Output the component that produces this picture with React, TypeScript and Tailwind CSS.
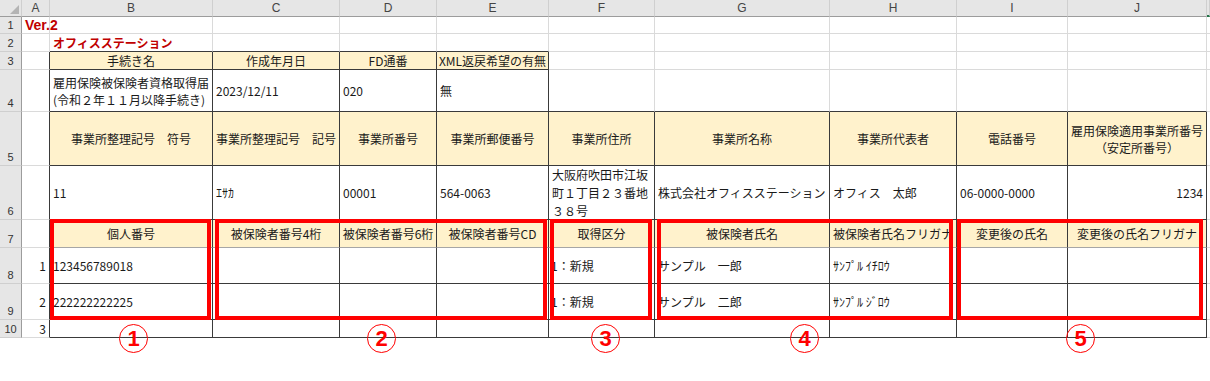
import type { ReactNode } from 'react'

type Cell = { t?: ReactNode; fill?: boolean; align?: 'l' | 'c' | 'r'; cls?: string }

const colLabels = ['A', 'B', 'C', 'D', 'E', 'F', 'G', 'H', 'I', 'J', '']

// rows 1..10, columns A..K (index 0..10)
const rows: Record<number, Cell>[] = [
  { 0: { t: 'Ver.2', cls: 'overflow-visible font-bold text-[14px] text-[#c00000] font-["Liberation_Sans"]' } },
  { 1: { t: 'オフィスステーション', cls: 'font-bold text-[11.5px] text-[#c00000]' } },
  {
    1: { t: '手続き名', fill: true, align: 'c' },
    2: { t: '作成年月日', fill: true, align: 'c' },
    3: { t: 'FD通番', fill: true, align: 'c' },
    4: { t: 'XML返戻希望の有無', fill: true, align: 'c' },
  },
  {
    1: { t: <>雇用保険被保険者資格取得届<br />(令和２年１１月以降手続き)</> },
    2: { t: '2023/12/11' },
    3: { t: '020' },
    4: { t: '無' },
  },
  {
    1: { t: '事業所整理記号　符号', fill: true, align: 'c' },
    2: { t: '事業所整理記号　記号', fill: true, align: 'c' },
    3: { t: '事業所番号', fill: true, align: 'c' },
    4: { t: '事業所郵便番号', fill: true, align: 'c' },
    5: { t: '事業所住所', fill: true, align: 'c' },
    6: { t: '事業所名称', fill: true, align: 'c' },
    7: { t: '事業所代表者', fill: true, align: 'c' },
    8: { t: '電話番号', fill: true, align: 'c' },
    9: { t: <>雇用保険適用事業所番号<br />（安定所番号）</>, fill: true, align: 'c' },
  },
  {
    1: { t: '11' },
    2: { t: 'ｴｻｶ' },
    3: { t: '00001' },
    4: { t: '564-0063' },
    5: { t: <>大阪府吹田市江坂<br />町１丁目２３番地<br />３８号</>, cls: 'leading-[18px]' },
    6: { t: '株式会社オフィスステーション' },
    7: { t: 'オフィス　太郎' },
    8: { t: '06-0000-0000' },
    9: { t: '1234', align: 'r' },
  },
  {
    1: { t: '個人番号', fill: true, align: 'c' },
    2: { t: '被保険者番号4桁', fill: true, align: 'c' },
    3: { t: '被保険者番号6桁', fill: true, align: 'c' },
    4: { t: '被保険者番号CD', fill: true, align: 'c' },
    5: { t: '取得区分', fill: true, align: 'c' },
    6: { t: '被保険者氏名', fill: true, align: 'c' },
    7: { t: '被保険者氏名フリガナ', fill: true, align: 'c' },
    8: { t: '変更後の氏名', fill: true, align: 'c' },
    9: { t: '変更後の氏名フリガナ', fill: true, align: 'c' },
  },
  {
    0: { t: '1', align: 'r' },
    1: { t: '123456789018' },
    5: { t: '1：新規', cls: 'pl-[2px]' },
    6: { t: 'サンプル　一郎' },
    7: { t: 'ｻﾝﾌﾟﾙ ｲﾁﾛｳ' },
  },
  {
    0: { t: '2', align: 'r' },
    1: { t: '222222222225' },
    5: { t: '1：新規', cls: 'pl-[2px]' },
    6: { t: 'サンプル　二郎' },
    7: { t: 'ｻﾝﾌﾟﾙ ｼﾞﾛｳ' },
  },
  { 0: { t: '3', align: 'r' } },
]

const isTable = (r: number, c: number) =>
  (r >= 3 && r <= 4 && c >= 1 && c <= 4) || (r >= 5 && r <= 10 && c >= 1 && c <= 9)

const boxes = [
  'left-[50px] w-[161px]',
  'left-[215px] w-[332px]',
  'left-[550px] w-[102px]',
  'left-[657px] w-[296px]',
  'left-[957px] w-[246px]',
]

const marks = [
  { n: '1', pos: 'left-[119px]' },
  { n: '2', pos: 'left-[367px]' },
  { n: '3', pos: 'left-[591px]' },
  { n: '4', pos: 'left-[790px]' },
  { n: '5', pos: 'left-[1066px]' },
]

export default function App() {
  return (
    <div className="relative w-[1210px] h-[381px] bg-white overflow-hidden font-['Noto_Sans_CJK_JP',sans-serif]">
      <div className="grid grid-cols-[22px_28px_163px_127px_97px_112px_106px_175px_127px_111px_139px_3px] grid-rows-[17px_17px_18px_18px_42px_54px_54px_28px_36px_36px_18px]">
        {/* Corner */}
        <div className="relative bg-[#e6e6e6] border-r border-b border-r-[#cfcfcf] border-b-[#9c9c9c]">
          <svg className="absolute right-[2px] bottom-[2px]" width="9" height="9" viewBox="0 0 9 9">
            <path d="M9 0 L9 9 L0 9 Z" fill="#b4b4b4" />
          </svg>
        </div>

        {/* Column headers */}
        {colLabels.map((l, i) => (
          <div
            key={'h' + i}
            className={`flex items-center justify-center bg-[#e6e6e6] border-r border-b border-r-[#cfcfcf] text-[12px] text-[#444] font-['Liberation_Sans',sans-serif] ${
              i === 10 ? 'border-b-2 border-b-[#217346]' : 'border-b-[#9c9c9c]'
            }`}
          >
            {l}
          </div>
        ))}

        {rows.map((row, ri) => {
          const r = ri + 1
          return [
            <div
              key={'r' + r}
              className="flex items-end justify-center pb-px bg-[#e6e6e6] border-r border-b border-r-[#9c9c9c] border-b-[#cfcfcf] text-[11px] leading-[13px] text-[#333] font-['Liberation_Sans',sans-serif]"
            >
              {r}
            </div>,
            ...Array.from({ length: 11 }, (_, c) => {
              const cell = row[c] || {}
              const darkR = isTable(r, c) || isTable(r, c + 1)
              const darkB = isTable(r, c) || isTable(r + 1, c)
              const bR = darkR ? 'border-r-[#3a3a3a]' : 'border-r-[#dadada]'
              const bB = r === 7 && isTable(r, c) ? 'border-b-[#a6a6a6]' : darkB ? 'border-b-[#3a3a3a]' : 'border-b-[#dadada]'
              const just = cell.align === 'c' ? 'justify-center text-center' : cell.align === 'r' ? 'justify-end text-right' : 'justify-start text-left'
              return (
                <div
                  key={r + '-' + c}
                  className={`flex items-center whitespace-nowrap px-[3px] text-[12px] leading-[17px] text-[#1a1a1a] border-r border-b ${bR} ${bB} ${just} ${
                    cell.fill ? 'bg-[#fff2cc]' : ''
                  } ${cell.cls ?? 'overflow-hidden'}`}
                >
                  {cell.t !== undefined && <span>{cell.t}</span>}
                </div>
              )
            }),
          ]
        })}
      </div>

      {/* Red highlight boxes */}
      {boxes.map((b) => (
        <div key={b} className={`absolute top-[219px] h-[101px] border-4 border-[#ff0000] ${b}`} />
      ))}

      {/* Circled numbers */}
      {marks.map((m) => (
        <div
          key={m.n}
          className={`absolute top-[324px] w-[29px] h-[29px] rounded-full border border-[#ff0000] flex items-center justify-center text-[#ff0000] font-bold text-[22px] leading-none font-['Liberation_Sans',sans-serif] ${m.pos}`}
        >
          {m.n}
        </div>
      ))}
    </div>
  )
}
